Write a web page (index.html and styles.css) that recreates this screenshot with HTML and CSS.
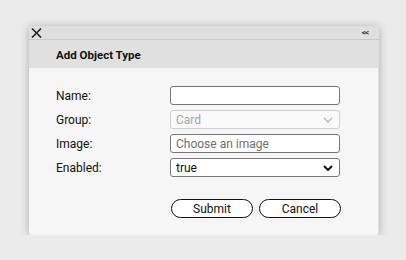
FILE: index.html
```html
<!DOCTYPE html>
<html>
<head>
<meta charset="utf-8">
<link rel="stylesheet" href="styles.css">
</head>
<body>
<div class="dialog">
  <div class="titlebar">
    <svg class="close" width="11" height="10" viewBox="0 0 11 10"><path d="M1 0.5 L10 9.5 M10 0.5 L1 9.5" stroke="#222" stroke-width="1.6" fill="none"/></svg>
    <span class="collapse">&lt;&lt;</span>
  </div>
  <div class="header">Add Object Type</div>
  <div class="content">
    <form class="form">
      <label class="label">Name:</label>
      <input class="field" type="text">
      <label class="label">Group:</label>
      <div class="select disabled">
        <span>Card</span>
        <svg class="chev" width="10" height="6" viewBox="0 0 10 6"><path d="M1 1 L5 5 L9 1" stroke="#b5b5b5" stroke-width="1.4" fill="none"/></svg>
      </div>
      <label class="label">Image:</label>
      <input class="field" type="text" placeholder="Choose an image">
      <label class="label">Enabled:</label>
      <div class="select">
        <span>true</span>
        <svg class="chev" width="10" height="6" viewBox="0 0 10 6"><path d="M1 1 L5 5 L9 1" stroke="#111" stroke-width="2" fill="none"/></svg>
      </div>
    </form>
    <div class="buttons">
      <button class="btn" type="button">Submit</button>
      <button class="btn" type="button">Cancel</button>
    </div>
  </div>
</div>
</body>
</html>
```

FILE: styles.css
```css
html, body {
  margin: 0;
  padding: 0;
  background: #ebebeb;
  font-family: Roboto, "Liberation Sans", sans-serif;
}
body {
  padding: 26px 0 0 29px;
}
.dialog {
  width: 350px;
  height: 209px;
  background: #e0e0e0;
  border-radius: 3px;
  box-shadow: 0 1px 8px rgba(0,0,0,0.28);
  display: flex;
  flex-direction: column;
  overflow: hidden;
}
.titlebar {
  height: 13px;
  border-bottom: 1px solid #c9c9c9;
  background: #dfdfdf;
  display: flex;
  align-items: center;
  justify-content: space-between;
  padding: 0 11px 0 2px;
}
.close {
  display: block;
  margin-top: 1px;
}
.collapse {
  font-size: 8px;
  font-weight: bold;
  color: #333;
  letter-spacing: -1px;
  line-height: 1;
}
.header {
  height: 28px;
  display: flex;
  align-items: center;
  padding-left: 27px;
  padding-top: 1px;
  box-sizing: border-box;
  font-size: 11.5px;
  font-weight: bold;
  color: #111;
  background: #e0e0e0;
}
.content {
  flex: 1;
  background: #f6f6f6;
  margin-right: 1px;
  padding: 18px 0 0 27px;
}
.form {
  display: grid;
  grid-template-columns: 114px 170px;
  grid-auto-rows: 19px;
  row-gap: 5px;
  margin: 0;
}
.label {
  font-size: 12px;
  color: #111;
  display: flex;
  align-items: center;
}
.field, .select {
  box-sizing: border-box;
  width: 170px;
  height: 19px;
  border: 1px solid #777;
  border-radius: 3px;
  background: #fff;
  font-family: Roboto, "Liberation Sans", sans-serif;
  font-size: 12px;
  padding: 0 5px;
  margin: 0;
  color: #111;
  outline: none;
}
.field::placeholder {
  color: #6f6f6f;
}
.select {
  display: flex;
  align-items: center;
  justify-content: space-between;
  padding-right: 6px;
}
.select.disabled {
  border-color: #cfcfcf;
  color: #a5a5a5;
  background: #fafafa;
}
.buttons {
  display: flex;
  gap: 6px;
  margin: 22px 0 0 115px;
}
.btn {
  box-sizing: border-box;
  width: 82px;
  height: 19px;
  border: 1px solid #111;
  border-radius: 10px;
  background: #fff;
  font-family: Roboto, "Liberation Sans", sans-serif;
  font-size: 12px;
  color: #111;
  padding: 0;
}
```
